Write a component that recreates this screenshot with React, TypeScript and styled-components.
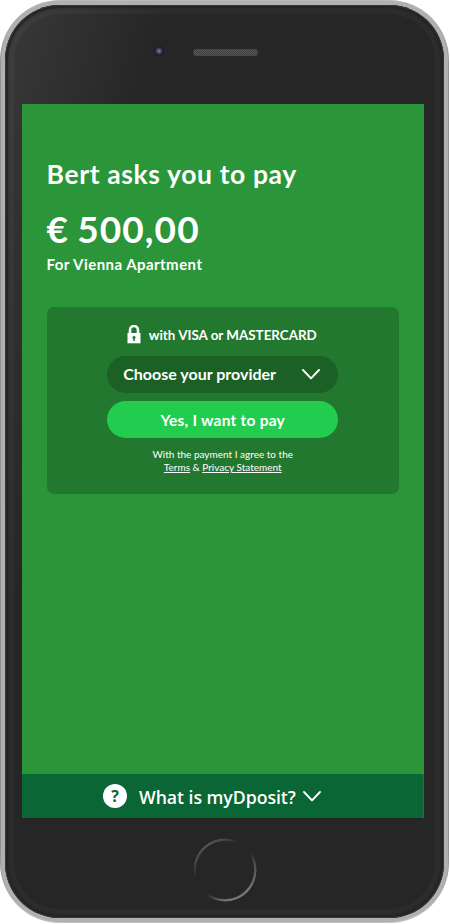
import React from "react";
import styled, { createGlobalStyle } from "styled-components";

const GlobalStyle = createGlobalStyle`
  *, *::before, *::after { box-sizing: border-box; }
  body { margin: 0; background: #fff; color: #fff; font-family: Lato, sans-serif; }
  button { font: inherit; color: inherit; border: 0; cursor: pointer; }
`;

const Phone = styled.div`
  width: 449px;
  height: 923px;
  padding: 1px;
  border-radius: 60px;
  background: linear-gradient(#b9bab9, #8f8f8f 8%, #8f8f8f 92%, #c4c4c4);
`;

const Rim = styled.div`
  height: 100%;
  padding: 4px;
  border-radius: 59px;
  background: #b0b0b0;
`;

const Body = styled.div`
  height: 100%;
  border-radius: 55px;
  padding: 0 20px 0 17px;
  display: flex;
  flex-direction: column;
  background: linear-gradient(104deg, #393939 0%, #262626 24%);
  box-shadow: inset 0 0 0 1px #383838, inset 0 0 2px 3px #232323, inset 0 0 0 9px rgba(255, 255, 255, 0.03);
`;

const TopBezel = styled.div`
  height: 98.5px;
  flex: none;
  display: flex;
  align-items: flex-start;
  padding: 40px 0 0 131px;
`;

const Camera = styled.div`
  width: 12px;
  height: 12px;
  border-radius: 50%;
  background: radial-gradient(circle, #7a6f8e 0 1px, #433b58 2px 3px, #1d1c20 4px 5px, #303030 6px);
`;

const Speaker = styled.div`
  width: 65px;
  height: 7px;
  margin: 4px 0 0 28px;
  border-radius: 4px;
  background: repeating-conic-gradient(#555 0 25%, #414141 0 50%) 0 0 / 2px 2px;
  box-shadow: inset 0 0 1px #333;
`;

const Screen = styled.main`
  width: 402px;
  height: 714px;
  flex: none;
  display: flex;
  flex-direction: column;
  background: #2b9539;
`;

const Content = styled.div`
  flex: 1;
  padding: 53.5px 25px 0 24.5px;
`;

const Line = styled.p<{ $size: number; $height: number; $spacing?: number }>`
  margin: 0;
  font-size: ${(p) => p.$size}px;
  line-height: ${(p) => p.$height}px;
  letter-spacing: ${(p) => p.$spacing ?? 0}px;
  font-weight: 700;
  white-space: nowrap;
`;

const Amount = styled(Line)`
  margin-top: 12px;
  word-spacing: -2px;
`;

const Card = styled.section`
  height: 187px;
  margin-top: 33px;
  padding: 18px 0 0;
  border-radius: 7px;
  background: #23782f;
  display: flex;
  flex-direction: column;
  align-items: center;
`;

const Methods = styled.div`
  height: 19px;
  padding-right: 2px;
  display: flex;
  align-items: center;
  gap: 8px;
`;

const Select = styled.button`
  width: 231px;
  height: 36.5px;
  margin-top: 12px;
  padding: 0 18px 0 16px;
  display: flex;
  align-items: center;
  justify-content: space-between;
  border-radius: 19px;
  background: #1b6024;
`;

const PayButton = styled.button`
  width: 231px;
  height: 37px;
  margin-top: 8.5px;
  padding: 0;
  border-radius: 19px;
  background: #22cc4f;
`;

const Legal = styled.p`
  margin: 10px 0 0;
  text-align: center;
  font-size: 10px;
  line-height: 13px;
`;

const TextLink = styled.a`
  text-decoration: underline;
  text-underline-offset: 1px;
`;

const Footer = styled.footer`
  height: 44px;
  padding: 2px 0 0 81px;
  display: flex;
  align-items: center;
  background: #0a6635;
  box-shadow: inset -1px 0 #1b7938;
`;

const Question = styled.p`
  margin: 0 7px 0 12px;
  font: 600 17.7px/24px "Open Sans", sans-serif;
  letter-spacing: -0.05px;
  white-space: nowrap;
`;

const Help = styled.span`
  width: 24px;
  height: 24px;
  margin-bottom: 2px;
  border-radius: 50%;
  background: #fff;
  color: #0a6635;
  text-align: center;
  font: 700 16px/24px "Open Sans", sans-serif;
`;

const BottomBezel = styled.div`
  flex: 1;
  display: flex;
  justify-content: center;
  padding: 20px 0 0 3px;
`;

const HomeButton = styled.div`
  width: 64px;
  height: 64px;
  border-radius: 50%;
  background: conic-gradient(from 0deg, #484848 0deg, #262626 25deg 55deg, #505050 80deg, #777 130deg, #757575 180deg, #262626 218deg 255deg, #464646 285deg, #555 330deg, #484848 360deg);
  mask: radial-gradient(circle, transparent 28.5px, #000 29.7px 31px, transparent 32px);
`;

const Lock = () => (
  <svg width="14" height="19" viewBox="0 0 14 19" aria-hidden="true">
    <path d="M3 9V5a4 4 0 0 1 8 0v4" fill="none" stroke="#fff" strokeWidth="2.6" />
    <path d="M0.5 8h13v10.3h-13z" fill="#fff" />
    <path d="M6.3 15.7v-2a1.4 1.4 0 1 1 1.4 0v2z" fill="#23782f" stroke="#23782f" strokeWidth="0.4" />
  </svg>
);

const Chevron = () => (
  <svg width="18" height="11" viewBox="0 0 18 11" aria-hidden="true">
    <path d="M1 1l8 8.4L17 1" fill="none" stroke="#fff" strokeWidth="1.9" strokeLinecap="round" strokeLinejoin="round" />
  </svg>
);

export default function App() {
  return (
    <>
      <GlobalStyle />
      <Phone>
        <Rim>
          <Body>
            <TopBezel>
              <Camera />
              <Speaker />
            </TopBezel>
            <Screen>
              <Content>
                <Line $size={26.5} $height={34} $spacing={0.62}>Bert asks you to pay</Line>
                <Amount $size={37} $height={51} $spacing={1.1}>€ 500,00</Amount>
                <Line $size={15} $height={20} $spacing={0.45}>For Vienna Apartment</Line>
                <Card>
                  <Methods>
                    <Lock />
                    <Line $size={13.4} $height={20}>with VISA or MASTERCARD</Line>
                  </Methods>
                  <Select>
                    <Line $size={16} $height={20}>Choose your provider</Line>
                    <Chevron />
                  </Select>
                  <PayButton>
                    <Line $size={15.5} $height={20} $spacing={0.24}>Yes, I want to pay</Line>
                  </PayButton>
                  <Legal>
                    With the payment I agree to the
                    <br />
                    <TextLink>Terms</TextLink> &amp; <TextLink>Privacy Statement</TextLink>
                  </Legal>
                </Card>
              </Content>
              <Footer>
                <Help>?</Help>
                <Question>What is myDposit?</Question>
                <Chevron />
              </Footer>
            </Screen>
            <BottomBezel>
              <HomeButton />
            </BottomBezel>
          </Body>
        </Rim>
      </Phone>
    </>
  );
}
